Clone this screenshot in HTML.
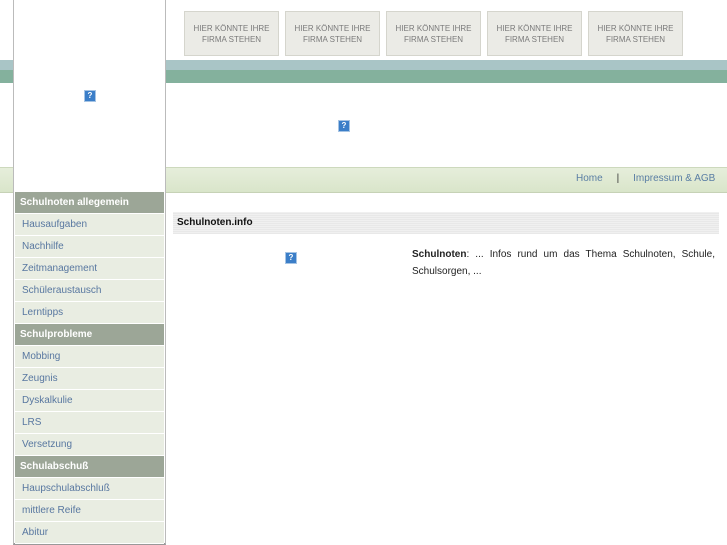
<!DOCTYPE html>
<html><head><meta charset="utf-8"><style>
body{margin:0;width:727px;height:545px;position:relative;overflow:hidden;background:#fff;font-family:"Liberation Sans",sans-serif;}
.a{position:absolute}
.band1{left:0;top:60px;width:727px;height:10px;background:#a9c5c6}
.band2{left:0;top:70px;width:727px;height:13px;background:#84b19d}
.nav{left:0;top:167px;width:727px;height:24px;background:linear-gradient(#e6eedb,#d9e5ca);border-top:1px solid #cdd9bd;border-bottom:1px solid #c6d2b6}
.side{left:13px;top:0;width:151px;height:543px;background:#fff;border-left:1px solid #bbb;border-right:1px solid #bbb;border-bottom:2px solid #999}
.ad{top:11px;width:95px;background:#ebebe6;border:1px solid #d5d5cd;color:#7a7a7a;font-size:8px;text-align:center;line-height:11px;padding-top:11px;box-sizing:border-box;height:45px}
.q{width:10px;height:10px;background:#3b7ec8;border:1px solid #a6c4e4;color:#fff;font-size:8px;line-height:10px;text-align:center;font-weight:bold}
.menu{left:15px;top:192px;width:149px}
.h{height:21px;background:#9ca697;color:#fff;font-weight:bold;font-size:10px;line-height:21px;padding-left:5px;border-bottom:1px solid #fff}
.i{height:21px;background:#e9ede2;color:#5877a0;font-size:10px;line-height:21px;padding-left:7px;border-bottom:1px solid #fff}
</style></head><body>
<div class="a band1"></div><div class="a band2"></div><div class="a nav"></div>
<div class="a side"></div>
<div class="a q" style="left:84px;top:90px">?</div>
<div class="a ad" style="left:184px">HIER KÖNNTE IHRE<br>FIRMA STEHEN</div>
<div class="a ad" style="left:285px">HIER KÖNNTE IHRE<br>FIRMA STEHEN</div>
<div class="a ad" style="left:386px">HIER KÖNNTE IHRE<br>FIRMA STEHEN</div>
<div class="a ad" style="left:487px">HIER KÖNNTE IHRE<br>FIRMA STEHEN</div>
<div class="a ad" style="left:588px">HIER KÖNNTE IHRE<br>FIRMA STEHEN</div>
<div class="a q" style="left:338px;top:120px">?</div>
<div class="a" style="left:576px;top:173px;font-size:10px;color:#5a7ea4">Home &nbsp;&nbsp;&nbsp;&nbsp;<span style="color:#333">|</span>&nbsp;&nbsp;&nbsp;&nbsp; Impressum &amp; AGB</div>
<div class="a menu">
<div class="h">Schulnoten allegemein</div>
<div class="i">Hausaufgaben</div><div class="i">Nachhilfe</div><div class="i">Zeitmanagement</div><div class="i">Schüleraustausch</div><div class="i">Lerntipps</div>
<div class="h">Schulprobleme</div>
<div class="i">Mobbing</div><div class="i">Zeugnis</div><div class="i">Dyskalkulie</div><div class="i">LRS</div><div class="i">Versetzung</div>
<div class="h">Schulabschuß</div>
<div class="i">Haupschulabschluß</div><div class="i">mittlere Reife</div><div class="i">Abitur</div>
</div>
<div class="a" style="left:173px;top:212px;width:546px;height:22px;background:repeating-linear-gradient(#f0f0f0 0 1px,#e8e8e8 1px 2px);font-size:10px;font-weight:bold;line-height:22px;padding-left:4px;box-sizing:border-box;color:#111">Schulnoten.info</div>
<div class="a q" style="left:285px;top:252px">?</div>
<div class="a" style="left:412px;top:246px;width:303px;font-size:10px;line-height:17px;color:#222;text-align:justify;text-align-last:left"><b>Schulnoten</b>: ... Infos rund um das Thema Schulnoten, Schule, Schulsorgen, ...</div>
</body></html>
